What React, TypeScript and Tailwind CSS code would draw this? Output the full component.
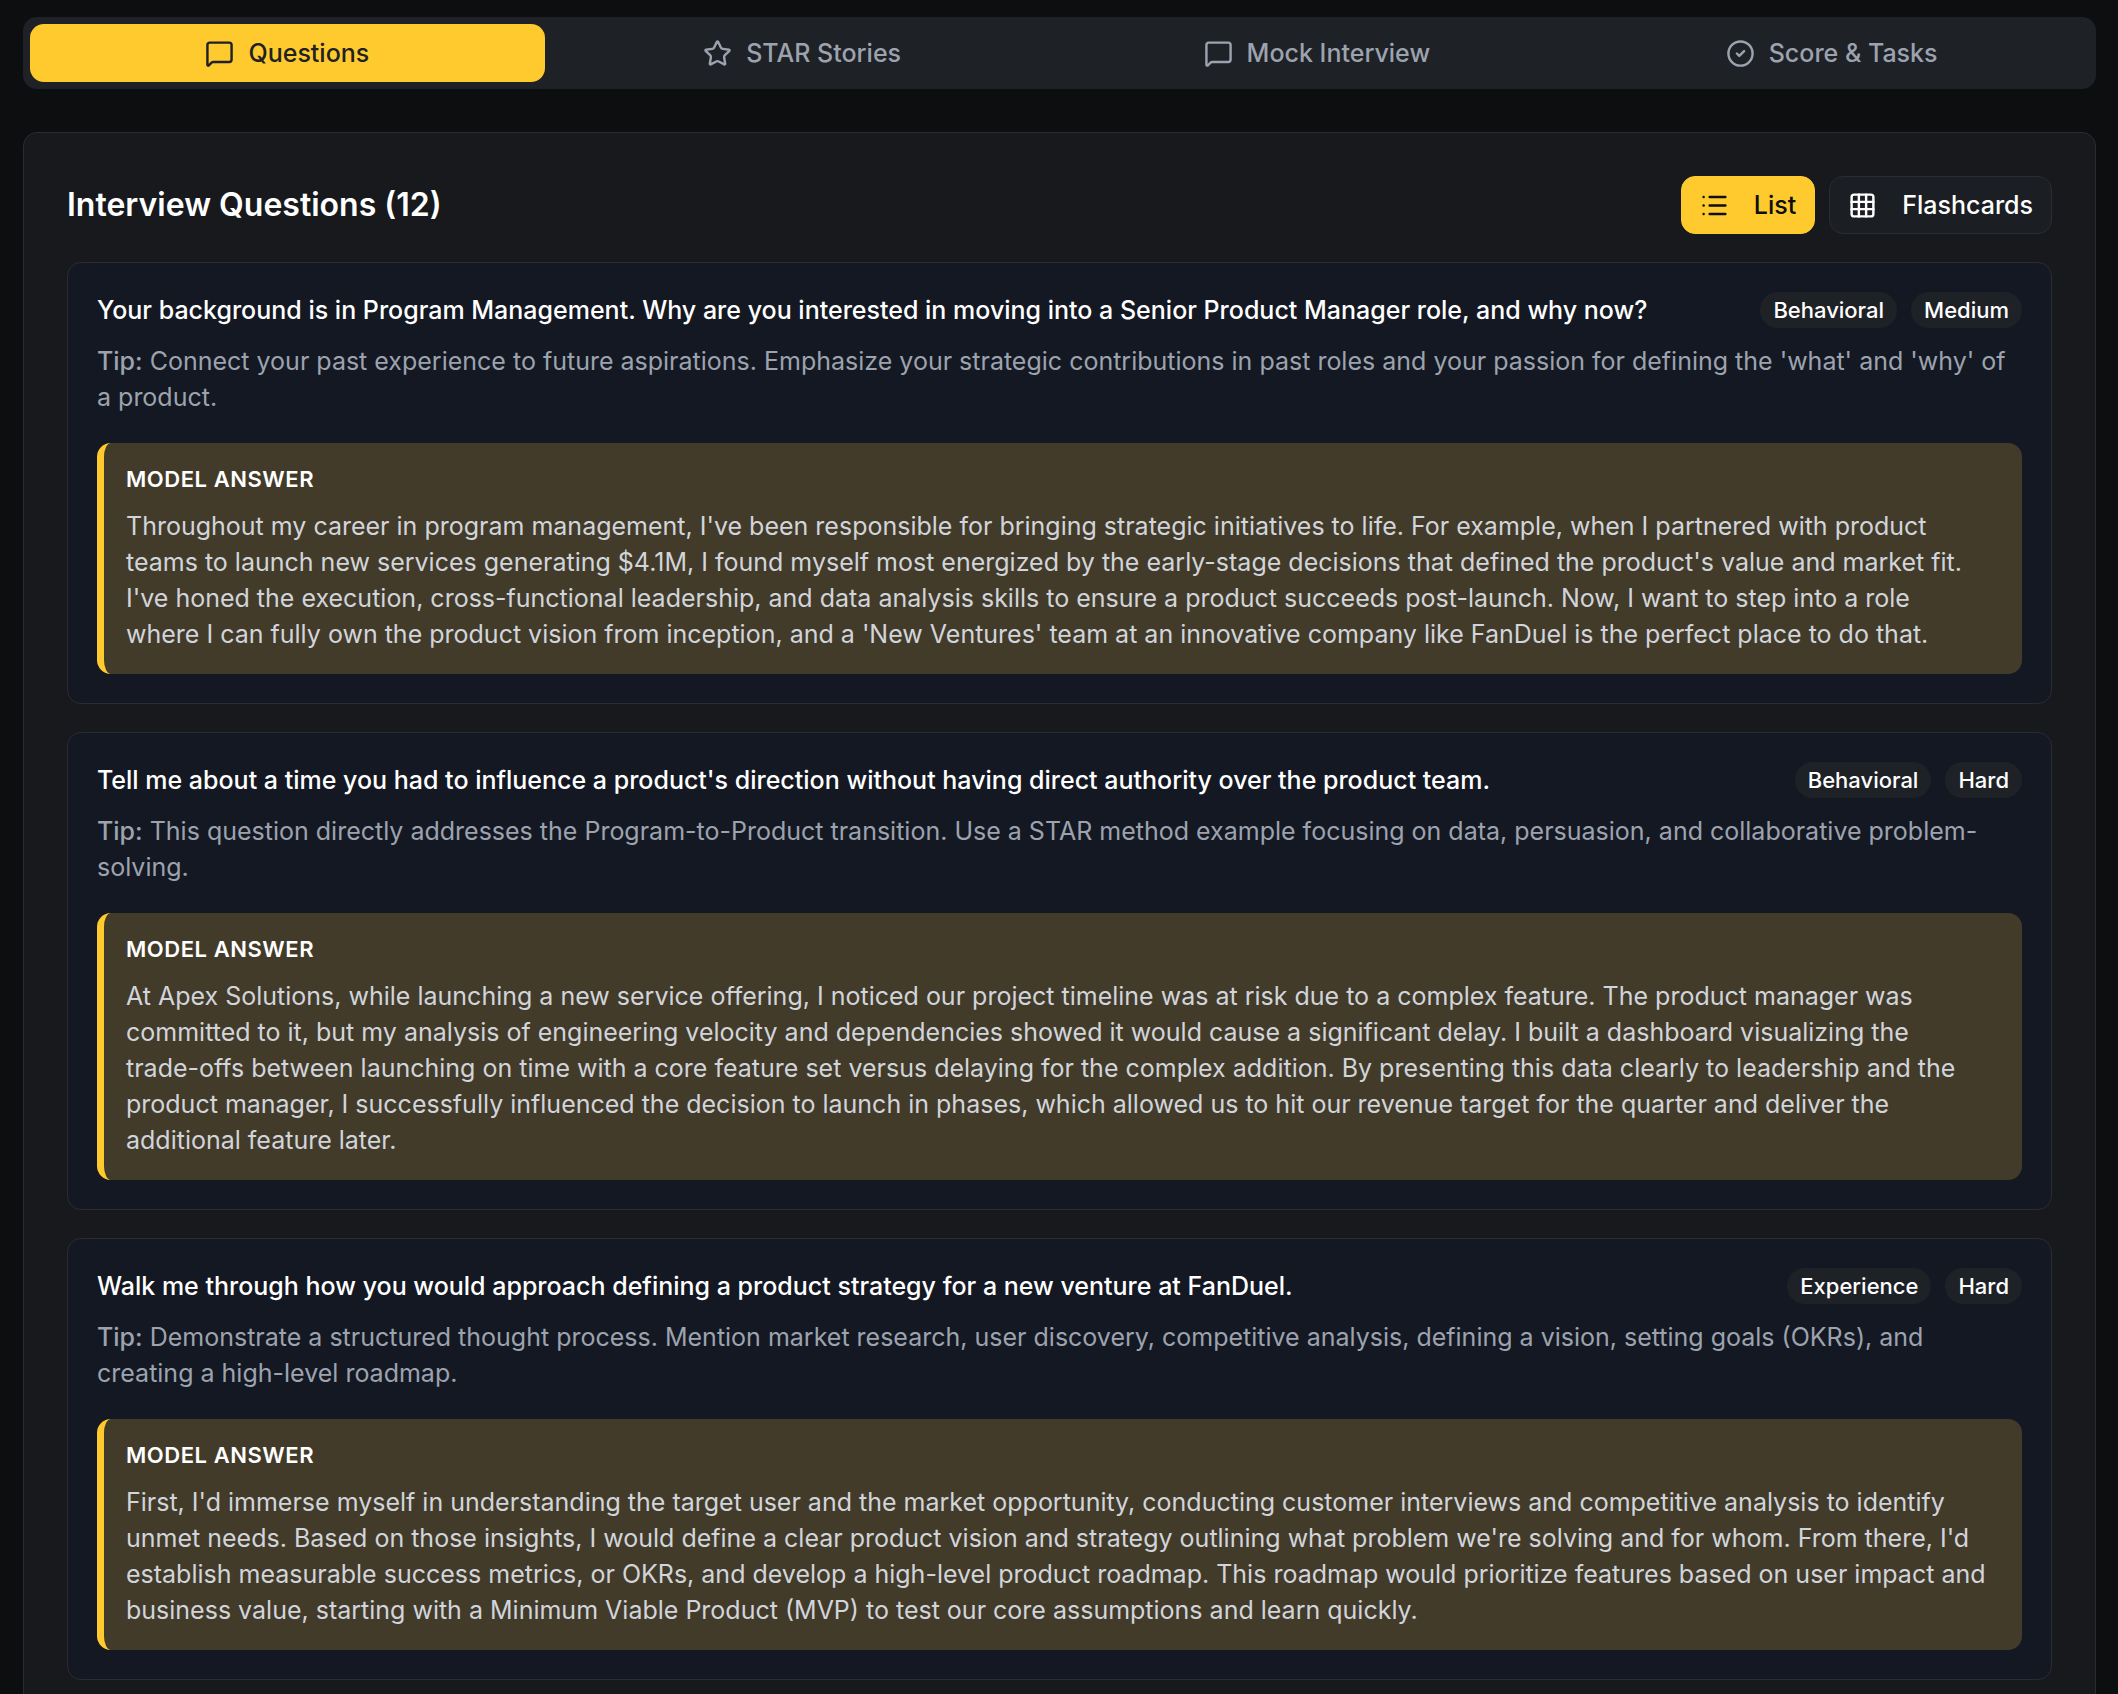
import React, { useState } from 'react'
import { CircleCheck, Grid3x3, List, MessageSquare, Star } from 'lucide-react'

interface Question {
  question: string
  category: string
  difficulty: string
  tip: string
  answer: string
}

const tabs = [
  { id: 'questions', label: 'Questions', icon: MessageSquare },
  { id: 'stories', label: 'STAR Stories', icon: Star },
  { id: 'mock', label: 'Mock Interview', icon: MessageSquare },
  { id: 'score', label: 'Score & Tasks', icon: CircleCheck }
]

const views = [
  { id: 'list', label: 'List', icon: List },
  { id: 'flashcards', label: 'Flashcards', icon: Grid3x3 }
]

const questions: Question[] = [
  {
    question: 'Your background is in Program Management. Why are you interested in moving into a Senior Product Manager role, and why now?',
    category: 'Behavioral',
    difficulty: 'Medium',
    tip: "Connect your past experience to future aspirations. Emphasize your strategic contributions in past roles and your passion for defining the 'what' and 'why' of a product.",
    answer: "Throughout my career in program management, I've been responsible for bringing strategic initiatives to life. For example, when I partnered with product teams to launch new services generating $4.1M, I found myself most energized by the early-stage decisions that defined the product's value and market fit. I've honed the execution, cross-functional leadership, and data analysis skills to ensure a product succeeds post-launch. Now, I want to step into a role where I can fully own the product vision from inception, and a 'New Ventures' team at an innovative company like FanDuel is the perfect place to do that."
  },
  {
    question: "Tell me about a time you had to influence a product's direction without having direct authority over the product team.",
    category: 'Behavioral',
    difficulty: 'Hard',
    tip: 'This question directly addresses the Program-to-Product transition. Use a STAR method example focusing on data, persuasion, and collaborative problem-solving.',
    answer: 'At Apex Solutions, while launching a new service offering, I noticed our project timeline was at risk due to a complex feature. The product manager was committed to it, but my analysis of engineering velocity and dependencies showed it would cause a significant delay. I built a dashboard visualizing the trade-offs between launching on time with a core feature set versus delaying for the complex addition. By presenting this data clearly to leadership and the product manager, I successfully influenced the decision to launch in phases, which allowed us to hit our revenue target for the quarter and deliver the additional feature later.'
  },
  {
    question: 'Walk me through how you would approach defining a product strategy for a new venture at FanDuel.',
    category: 'Experience',
    difficulty: 'Hard',
    tip: 'Demonstrate a structured thought process. Mention market research, user discovery, competitive analysis, defining a vision, setting goals (OKRs), and creating a high-level roadmap.',
    answer: "First, I'd immerse myself in understanding the target user and the market opportunity, conducting customer interviews and competitive analysis to identify unmet needs. Based on those insights, I would define a clear product vision and strategy outlining what problem we're solving and for whom. From there, I'd establish measurable success metrics, or OKRs, and develop a high-level product roadmap. This roadmap would prioritize features based on user impact and business value, starting with a Minimum Viable Product (MVP) to test our core assumptions and learn quickly."
  }
]

const Badge: React.FC<{ children: React.ReactNode }> = ({ children }) => (
  <span className="rounded-full bg-[#1e2126] px-[13px] text-[22px] leading-9 font-medium text-white">
    {children}
  </span>
)

const QuestionCard: React.FC<{ item: Question }> = ({ item }) => (
  <article className="rounded-[14px] border border-[#2a2c34] bg-[#141822] p-[29px]">
    <div className="flex items-start justify-between gap-7">
      <h3 className="text-[25px] leading-9 font-medium text-white">{item.question}</h3>
      <div className="flex shrink-0 gap-3.5">
        <Badge>{item.category}</Badge>
        <Badge>{item.difficulty}</Badge>
      </div>
    </div>

    <p className="mt-[15px] text-[25px] leading-9 text-[#9ca3af]">
      <strong className="font-medium">Tip:</strong> {item.tip}
    </p>

    {/* Model answer */}
    <div className="mt-7 rounded-[14px] border-l-[7px] border-[#ffca2d] bg-[#433b29] py-[22px] pr-[35px] pl-[22px]">
      <h4 className="text-[22px] leading-[29px] font-semibold tracking-wide text-white uppercase">Model Answer</h4>
      <p className="mt-3.5 text-[25px] leading-9 text-[#d1d5db]">{item.answer}</p>
    </div>
  </article>
)

const App: React.FC = () => {
  const [activeTab, setActiveTab] = useState('questions')
  const [view, setView] = useState('list')

  return (
    <div className="h-screen overflow-hidden bg-[#0c0e0f] pt-[17px] pr-[22px] pl-[23px] font-['Inter',sans-serif]">
      <nav role="tablist" className="grid grid-cols-4 rounded-[14px] bg-[#1e2126] p-[7px]">
        {tabs.map(({ id, label, icon: Icon }) => (
          <button
            key={id}
            role="tab"
            aria-selected={activeTab === id}
            onClick={() => setActiveTab(id)}
            className={`flex h-[58px] items-center justify-center gap-3.5 rounded-[14px] text-[25px] leading-9 font-medium ${
              activeTab === id ? 'bg-[#ffca2d] text-[#1e2126]' : 'text-[#9ca3af]'
            }`}
          >
            <Icon size={29} />
            {label}
          </button>
        ))}
      </nav>

      <main className="mt-[43px] rounded-[14px] border border-[#2a2c34] bg-[#18191d] p-[43px]">
        <div className="mb-7 flex items-center justify-between">
          <h2 className="text-[32px] leading-[50px] font-semibold text-white">Interview Questions (12)</h2>
          <div className="flex gap-3.5">
            {views.map(({ id, label, icon: Icon }) => (
              <button
                key={id}
                aria-pressed={view === id}
                onClick={() => setView(id)}
                className={`flex h-[58px] items-center gap-[25px] rounded-[14px] border px-[18px] text-[25px] leading-9 font-medium ${
                  view === id
                    ? 'border-[#ffca2d] bg-[#ffca2d] text-[#0c0e0f]'
                    : 'border-[#2a2c34] bg-[#1b1e22] text-white'
                }`}
              >
                <Icon size={29} />
                {label}
              </button>
            ))}
          </div>
        </div>

        <div className="flex flex-col gap-7">
          {questions.map((item) => (
            <QuestionCard key={item.question} item={item} />
          ))}
        </div>
      </main>
    </div>
  )
}

export default App
